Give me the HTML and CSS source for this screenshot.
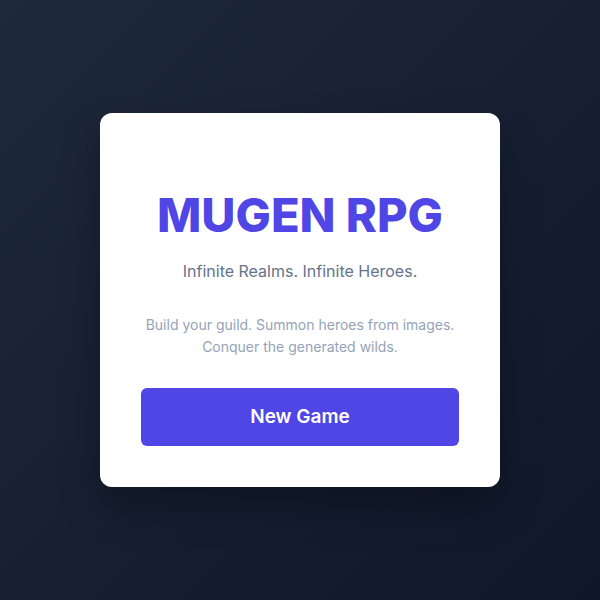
FILE: index.html
```html
<!DOCTYPE html>
<html lang="en">
<head>
<meta charset="utf-8">
<title>Mugen RPG</title>
<link rel="stylesheet" href="styles.css">
</head>
<body>
<main class="screen">
  <section class="card">
    <h1 class="title">MUGEN RPG</h1>
    <p class="subtitle">Infinite Realms. Infinite Heroes.</p>
    <p class="desc">Build your guild. Summon heroes from images.<br>Conquer the generated wilds.</p>
    <button class="btn" type="button">New Game</button>
  </section>
</main>
</body>
</html>
```
FILE: styles.css
```css
* { box-sizing: border-box; }
html, body { margin: 0; padding: 0; height: 100%; }
body {
  font-family: Inter, "Noto Sans", sans-serif;
  background: linear-gradient(135deg, #1e293b 0%, #0f172a 100%);
}
.screen {
  height: 600px;
  display: flex;
  align-items: center;
  justify-content: center;
}
.card {
  width: 400px;
  background: #ffffff;
  border-radius: 12px;
  padding: 40px 41px 41px;
  text-align: center;
  box-shadow: 0 20px 40px rgba(0, 0, 0, 0.3);
}
.title {
  margin: 34px 0 0;
  font-size: 47px;
  line-height: 56px;
  font-weight: 800;
  color: #4f46e5;
  letter-spacing: 0;
}
.subtitle {
  margin: 16px 0 0;
  font-size: 16px;
  line-height: 24px;
  color: #64748b;
}
.desc {
  margin: 31px 0 0;
  font-size: 14px;
  line-height: 22px;
  color: #94a3b8;
}
.btn {
  display: block;
  width: 100%;
  margin-top: 30px;
  padding: 15px 0;
  border: 0;
  border-radius: 6px;
  background: #4f46e5;
  color: #ffffff;
  font-family: inherit;
  font-size: 19px;
  line-height: 28px;
  font-weight: 600;
}
```
